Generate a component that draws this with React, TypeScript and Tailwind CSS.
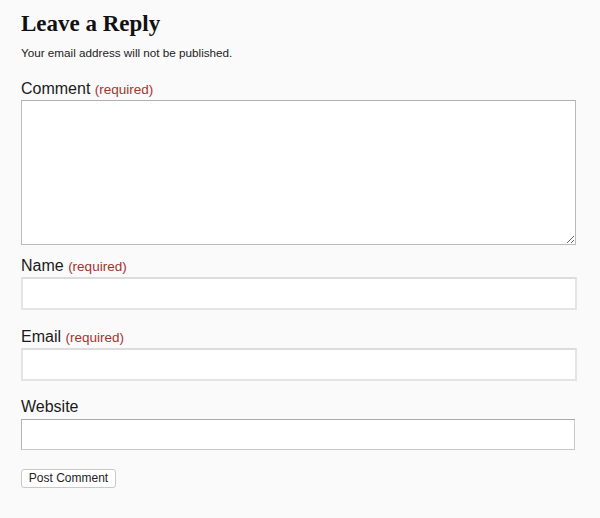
export default function App() {
  return (
    <div className="min-h-[518px] w-[600px] bg-[#fafafa] font-['Liberation_Sans',Arial,sans-serif] text-[#1a1a1a]">
      <div className="flex w-[597px] flex-col bg-[#fafafa] pt-[12px] pl-[21px]">
        {/* heading */}
        <h1 className="font-['Liberation_Serif','Times_New_Roman',serif] text-[23px] leading-[23px] font-bold text-[#111]">
          Leave a Reply
        </h1>
        <p className="mt-[12px] text-[11.7px] leading-[12px] text-[#222]">
          Your email address will not be published.
        </p>

        <label className="mt-[22px] h-[16px] text-[16px] leading-[16px]">
          Comment <span className="text-[13.5px] leading-[0] text-[#a5332e]">(required)</span>
        </label>
        <textarea className="mt-[3px] h-[145px] w-[555px] resize-y border border-[#bbbbbb] border-t-[#b0b0b0] bg-white outline-none" />

        <label className="mt-[13px] h-[16px] text-[16px] leading-[16px]">
          Name <span className="text-[13.5px] leading-[0] text-[#a5332e]">(required)</span>
        </label>
        <input
          type="text"
          className="mt-[3px] h-[33px] w-[556px] border-2 border-[#e4e4e4] border-t-[#dcdcdc] bg-white outline-none"
        />

        <label className="mt-[19px] h-[16px] text-[16px] leading-[16px]">
          Email <span className="text-[13.5px] leading-[0] text-[#a5332e]">(required)</span>
        </label>
        <input
          type="email"
          className="mt-[3px] h-[33px] w-[556px] border-2 border-[#e4e4e4] border-t-[#dcdcdc] bg-white outline-none"
        />

        <label className="mt-[18px] h-[16px] text-[16px] leading-[16px]">Website</label>
        <input
          type="url"
          className="mt-[4px] h-[31px] w-[554px] border border-[#c8c8c8] border-t-[#a9a9a9] border-l-[#b5b5b5] bg-white outline-none"
        />

        <div className="mt-[19px] flex">
          <button className="flex h-[19px] w-[95px] items-center justify-center rounded-[3px] border border-[#c9c9c9] bg-white text-[12px] leading-[17px] text-[#222]">
            Post Comment
          </button>
        </div>
      </div>
    </div>
  )
}
